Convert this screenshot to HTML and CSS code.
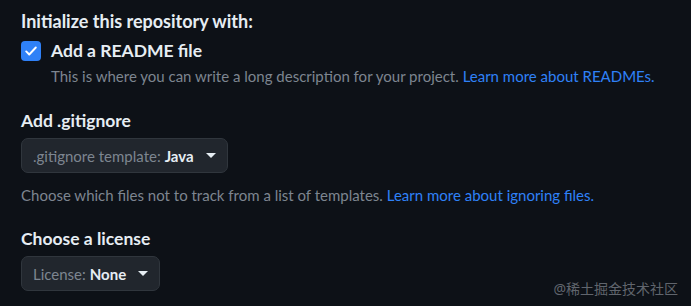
FILE: index.html
```html
<!DOCTYPE html>
<html lang="en">
<head>
    <meta charset="UTF-8">
    <meta name="viewport" content="width=device-width, initial-scale=1.0">
    <title>Initialize repository</title>
    <link rel="stylesheet" href="styles.css">
</head>
<body>
    <div class="container">
        <h2 class="section-title">Initialize this repository with:</h2>

        <div class="check-row">
            <span class="checkbox">
                <svg width="14" height="14" viewBox="0 0 16 16"><path d="M2.5 8.5 6 12l7.5-8" fill="none" stroke="#fff" stroke-width="2.2" stroke-linecap="round" stroke-linejoin="round"/></svg>
            </span>
            <div class="check-body">
                <label class="check-label">Add a README file</label>
                <p class="note">This is where you can write a long description for your project. <a href="#">Learn more about READMEs.</a></p>
            </div>
        </div>

        <div class="group">
            <h3 class="group-title">Add .gitignore</h3>
            <button class="select-btn">
                <span class="muted">.gitignore template:</span> <strong>Java</strong>
                <span class="caret"></span>
            </button>
            <p class="note help">Choose which files not to track from a list of templates. <a href="#">Learn more about ignoring files.</a></p>
        </div>

        <div class="group license">
            <h3 class="group-title">Choose a license</h3>
            <button class="select-btn">
                <span class="muted">License:</span> <strong>None</strong>
                <span class="caret"></span>
            </button>
        </div>
    </div>

    <div class="watermark">@稀土掘金技术社区</div>
</body>
</html>
```

FILE: styles.css
```css
body {
    margin: 0;
    background-color: #0d1117;
    color: #e6edf3;
    font-family: Lato, "Liberation Sans", sans-serif;
    height: 306px;
    overflow: hidden;
}
.container {
    padding: 9px 21px 0;
}
.section-title {
    margin: 0;
    font-size: 18px;
    font-weight: 700;
    line-height: 24px;
}
.check-row {
    display: flex;
    gap: 10px;
    margin-top: 5px;
}
.checkbox {
    width: 20px;
    height: 20px;
    margin-top: 3px;
    border-radius: 4px;
    background-color: #2f81f7;
    display: flex;
    align-items: center;
    justify-content: center;
    flex-shrink: 0;
}
.check-label {
    display: block;
    font-size: 17.5px;
    font-weight: 700;
    line-height: 26px;
}
.note {
    margin: 0;
    font-size: 15px;
    line-height: 24px;
    color: #7d8590;
}
.note a {
    color: #2f81f7;
    text-decoration: none;
}
.group {
    margin-top: 21px;
}
.group-title {
    margin: 0;
    font-size: 17.5px;
    font-weight: 700;
    line-height: 24px;
}
.select-btn {
    display: inline-flex;
    align-items: center;
    gap: 4px;
    margin-top: 5px;
    height: 35px;
    padding: 0 11px;
    background-color: #21262d;
    border: 1px solid #30363d;
    border-radius: 7px;
    font-family: inherit;
    font-size: 15px;
    color: #e6edf3;
}
.select-btn .muted {
    color: #7d8590;
}
.select-btn strong {
    font-weight: 700;
}
.caret {
    margin-left: 8px;
    width: 0;
    height: 0;
    border-left: 5px solid transparent;
    border-right: 5px solid transparent;
    border-top: 5px solid #e6edf3;
}
.help {
    margin-top: 10px;
}
.license {
    margin-top: 20px;
}
.watermark {
    position: absolute;
    right: 13px;
    bottom: 8px;
    font-size: 14px;
    color: #60656d;
    font-family: "Noto Sans", "Noto Sans CJK SC", sans-serif;
}
```
